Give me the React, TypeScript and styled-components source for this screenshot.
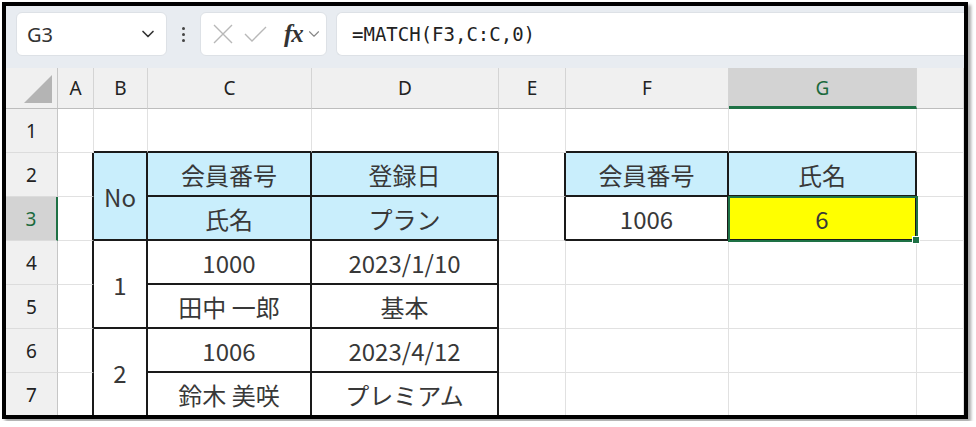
import React from 'react';
import styled, { createGlobalStyle, css } from 'styled-components';
import { ChevronDown } from 'lucide-react';

const PageBody = createGlobalStyle`
  body {
    margin: 0;
    background: #fff;
    font-family: "Noto Sans", "Noto Sans CJK JP", sans-serif;
  }
`;

const Frame = styled.div`
  box-sizing: border-box;
  width: 966px;
  height: 417px;
  margin: 2px;
  border: 4px solid #000;
  box-shadow: 3px 3px 3px rgba(0, 0, 0, 0.35);
  overflow: hidden;
  display: flex;
  flex-direction: column;
`;

const FormulaBar = styled.div`
  flex: none;
  height: 62px;
  box-sizing: border-box;
  padding: 6px 0 12px 10px;
  background: #e8ecf1;
  display: flex;
  align-items: stretch;
`;

const Box = styled.div`
  box-sizing: border-box;
  background: #fff;
  border: 1px solid #dde1e6;
  border-radius: 6px;
  display: flex;
  align-items: center;
`;

const NameBox = styled(Box)`
  width: 151px;
  justify-content: space-between;
  padding: 0 8px 0 10px;
  font-size: 20px;
  color: #333;
`;

const Dots = styled.div`
  width: 33px;
  display: flex;
  flex-direction: column;
  align-items: center;
  justify-content: center;
  gap: 3px;
`;

const Dot = styled.span`
  width: 3px;
  height: 3px;
  border-radius: 50%;
  background: #444;
`;

const FxBox = styled(Box)`
  width: 127px;
  padding: 0 0 0 12px;
  color: #b8b8b8;
`;

const Fx = styled.span`
  font-family: "Liberation Serif", serif;
  font-style: italic;
  font-weight: bold;
  font-size: 25px;
  color: #333;
  margin-left: 17px;
  letter-spacing: -1px;
`;

const FormulaInput = styled(Box)`
  flex: 1;
  margin-left: 9px;
  border-right: none;
  border-radius: 6px 0 0 6px;
  padding-left: 15px;
  font-family: "DejaVu Sans Mono", monospace;
  font-size: 19px;
  color: #222;
`;

const Sheet = styled.div`
  flex: 1;
  display: grid;
  grid-template-columns: 52px 36px 54px 164px 187px 67px 163px 188px 1fr;
  grid-template-rows: 41px repeat(7, 44px);
  background: #fff;
`;

const Corner = styled.div`
  background: #f0f0f0;
  border-right: 1px solid #c6c6c6;
  border-bottom: 1px solid #bdbdbd;
  display: flex;
  align-items: flex-end;
  justify-content: flex-end;
  padding: 0 5px 5px 0;
`;

const headBase = css`
  box-sizing: border-box;
  background: #f0f0f0;
  display: flex;
  align-items: center;
  justify-content: center;
  font-size: 19px;
  color: #222;
`;

const ColHead = styled.div<{ $active?: boolean }>`
  ${headBase}
  border-right: 1px solid #d4d4d4;
  border-bottom: 1px solid #bdbdbd;
  ${(p) =>
    p.$active &&
    css`
      background: #d3d3d3;
      color: #1b6a3d;
      border-bottom: 3px solid #1e7145;
      padding-top: 2px;
    `}
`;

const RowHead = styled.div<{ $active?: boolean }>`
  ${headBase}
  border-right: 1px solid #c6c6c6;
  border-bottom: 1px solid #dcdcdc;
  ${(p) =>
    p.$active &&
    css`
      background: #d3d3d3;
      color: #1b6a3d;
      border-right: 2px solid #1e7145;
    `}
`;

const Cell = styled.div<{
  $r?: boolean;
  $b?: boolean;
  $fill?: string;
  $span?: number;
  $selected?: boolean;
}>`
  box-sizing: border-box;
  grid-row: span ${(p) => p.$span || 1};
  background: ${(p) => p.$fill || '#fff'};
  border-right: ${(p) => (p.$r ? '2px solid #1a1a1a' : '1px solid #e1e1e1')};
  border-bottom: ${(p) => (p.$b ? '2px solid #1a1a1a' : '1px solid #e1e1e1')};
  display: flex;
  align-items: center;
  justify-content: center;
  font-family: "Noto Sans CJK JP", "Noto Sans", sans-serif;
  font-size: 24px;
  color: #383838;
  white-space: nowrap;
  ${(p) =>
    p.$selected &&
    css`
      position: relative;
      z-index: 1;
      outline: 2px solid #1e7145;
      outline-offset: -1px;
      &::after {
        content: '';
        position: absolute;
        right: -5px;
        bottom: -5px;
        width: 6px;
        height: 6px;
        background: #1e7145;
        border: 1px solid #fff;
      }
    `}
`;

const HEAD = '#c9eefc';
const COLS = ['A', 'B', 'C', 'D', 'E', 'F', 'G', 'H'];

type Spec = { text: string; fill?: string; span?: number; selected?: boolean };

const cells: Record<string, Spec> = {
  '1,2': { text: 'No', fill: HEAD, span: 2 },
  '2,2': { text: '会員番号', fill: HEAD },
  '3,2': { text: '登録日', fill: HEAD },
  '5,2': { text: '会員番号', fill: HEAD },
  '6,2': { text: '氏名', fill: HEAD },
  '2,3': { text: '氏名', fill: HEAD },
  '3,3': { text: 'プラン', fill: HEAD },
  '5,3': { text: '1006' },
  '6,3': { text: '6', fill: '#ffff00', selected: true },
  '1,4': { text: '1', span: 2 },
  '2,4': { text: '1000' },
  '3,4': { text: '2023/1/10' },
  '2,5': { text: '田中 一郎' },
  '3,5': { text: '基本' },
  '1,6': { text: '2', span: 2 },
  '2,6': { text: '1006' },
  '3,6': { text: '2023/4/12' },
  '2,7': { text: '鈴木 美咲' },
  '3,7': { text: 'プレミアム' },
};

const inTable = (c: number, r: number) =>
  (c >= 1 && c <= 3 && r >= 2 && r <= 7) || (c >= 5 && c <= 6 && r >= 2 && r <= 3);

const covered = new Set(['1,3', '1,5', '1,7']);

const CancelIcon = () => (
  <svg width="20" height="20" viewBox="0 0 20 20">
    <path d="M1 1 19 19 M19 1 1 19" stroke="currentColor" strokeWidth="1.4" fill="none" />
  </svg>
);

const EnterIcon = () => (
  <svg width="23" height="18" viewBox="0 0 23 18" style={{ marginLeft: 11 }}>
    <path d="M1 9 8 16 22 2" stroke="currentColor" strokeWidth="1.4" fill="none" />
  </svg>
);

const App = () => {
  const body: React.ReactNode[] = [];
  for (let r = 1; r <= 7; r++) {
    body.push(
      <RowHead key={`h${r}`} $active={r === 3}>
        {r}
      </RowHead>
    );
    COLS.forEach((_, c) => {
      const key = `${c},${r}`;
      if (covered.has(key)) return;
      const spec = cells[key];
      const span = spec?.span || 1;
      const last = r + span - 1;
      body.push(
        <Cell
          key={key}
          $span={span}
          $fill={spec?.fill}
          $selected={spec?.selected}
          $r={inTable(c, r) || inTable(c + 1, r)}
          $b={inTable(c, last) || inTable(c, last + 1)}
        >
          {spec?.text}
        </Cell>
      );
    });
  }

  return (
    <>
      <PageBody />
      <Frame>
        <FormulaBar>
          <NameBox>
            G3
            <ChevronDown size={20} color="#333" strokeWidth={2} />
          </NameBox>
          <Dots>
            <Dot />
            <Dot />
            <Dot />
          </Dots>
          <FxBox>
            <CancelIcon />
            <EnterIcon />
            <Fx>fx</Fx>
            <ChevronDown size={18} color="#888" strokeWidth={1.5} style={{ marginLeft: 2 }} />
          </FxBox>
          <FormulaInput>=MATCH(F3,C:C,0)</FormulaInput>
        </FormulaBar>
        <Sheet>
          <Corner>
            <svg width="28" height="28" viewBox="0 0 28 28">
              <polygon points="28,0 28,28 0,28" fill="#b4b4b4" />
            </svg>
          </Corner>
          {COLS.map((l, i) => (
            <ColHead key={l} $active={i === 6}>
              {i < 7 ? l : ''}
            </ColHead>
          ))}
          {body}
        </Sheet>
      </Frame>
    </>
  );
};

export default App;
